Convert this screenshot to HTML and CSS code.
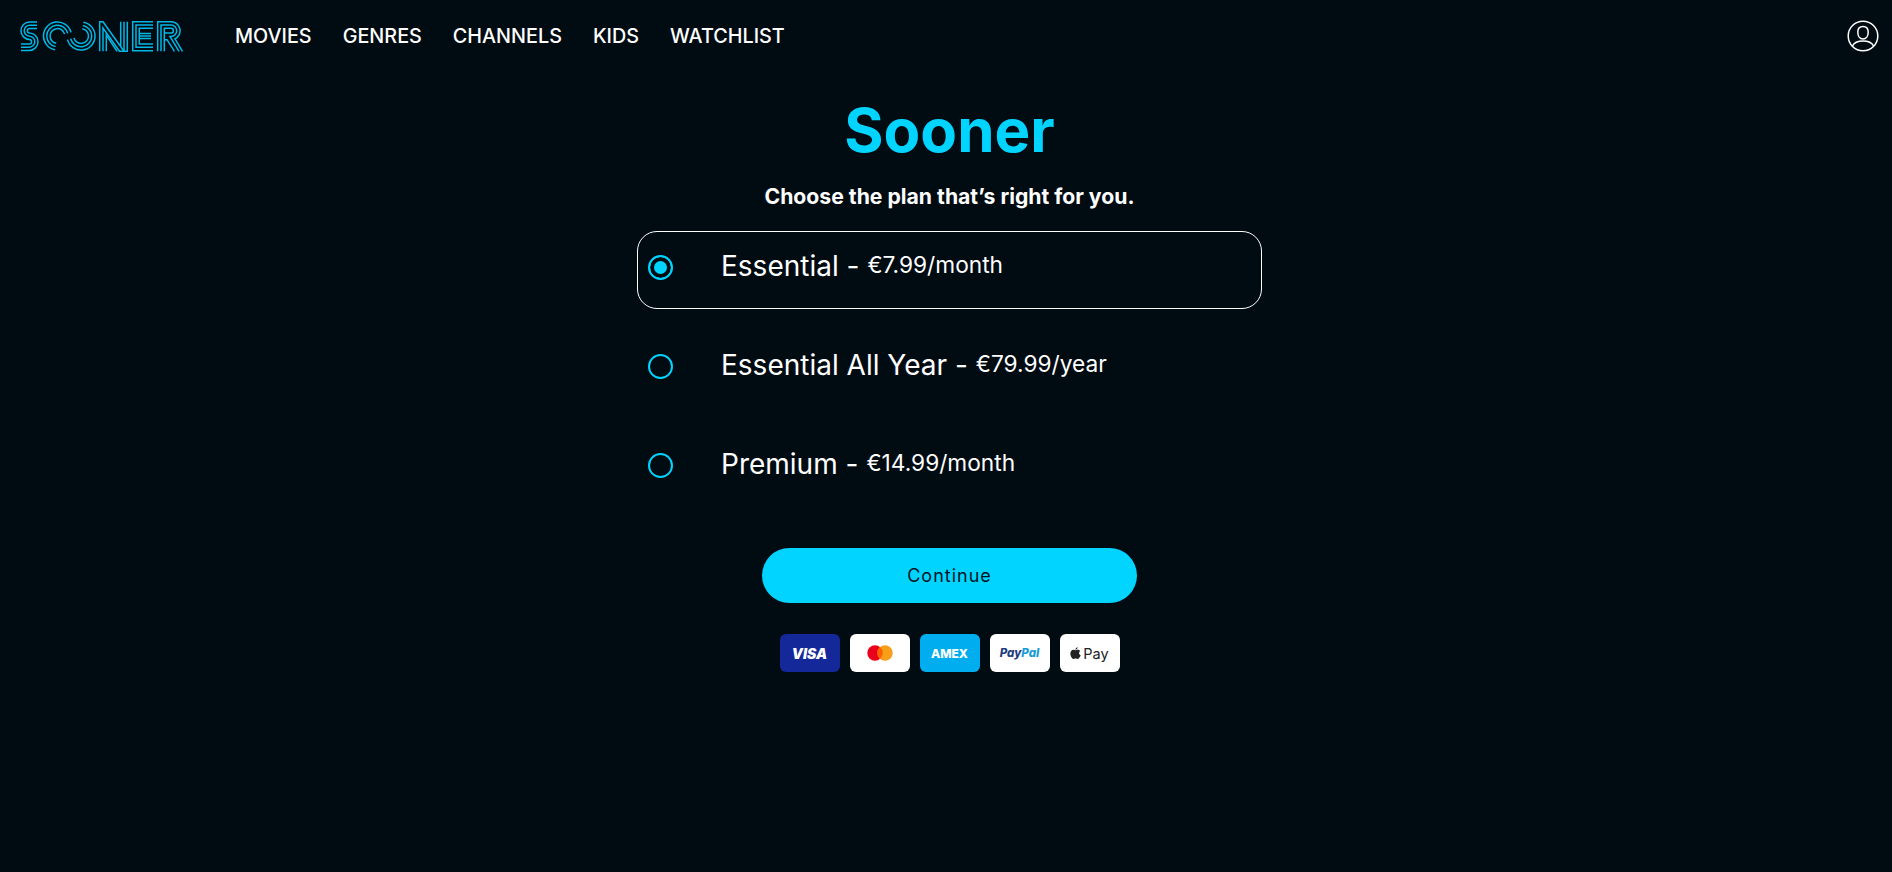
FILE: index.html
```html
<!DOCTYPE html>
<html lang="en">
<head>
    <meta charset="UTF-8">
    <meta name="viewport" content="width=device-width, initial-scale=1.0">
    <title>Sooner - Choose your plan</title>
    <link rel="stylesheet" href="styles.css">
</head>
<body>

<header class="topbar">
    <div class="topbar-left">
        <!-- striped wordmark, three lines per stroke -->
        <svg class="logo" width="164" height="31" viewBox="0 0 164 31" fill="none" stroke="#00b8e6" stroke-width="1.5" role="img" aria-label="Sooner">
            <!-- S -->
            <path d="M17 1H9.700A8.700 8.700 0 0 0 9.700 18.400H9.300A2.300 2.300 0 0 1 9.300 23H1"/>
            <path d="M17 4.200H9.700A5.500 5.500 0 0 0 9.700 15.200H9.300A5.500 5.500 0 0 1 9.300 26.200H1"/>
            <path d="M17 7.400H9.700A2.300 2.300 0 0 0 9.700 12H9.300A8.700 8.700 0 0 1 9.300 29.400H1"/>
            <!-- first O -->
            <path d="M51 11.400A14 14 0 1 0 35.100 28.800"/>
            <path d="M47.800 12.200A10.700 10.700 0 1 0 35.600 25.500"/>
            <path d="M44.600 13.100A7.400 7.400 0 1 0 36.200 22.300"/>
            <!-- second O -->
            <path d="M63.400 1.200A14 14 0 1 1 47.500 18.600"/>
            <path d="M62.900 4.500A10.700 10.700 0 1 1 50.700 17.800"/>
            <path d="M62.300 7.700A7.400 7.400 0 1 1 53.900 16.900"/>
            <!-- N -->
            <path d="M79.700 30.300V.7H83L104 30.300H107.300V.7"/>
            <path d="M83 30.300V7L99.500 30.300H104V.7"/>
            <path d="M86.300 30.300V14L97 30.300"/>
            <path d="M100.700 .7V25"/>
            <!-- E -->
            <path d="M133 .7H112.700V29.700H133"/>
            <path d="M133 4H116V26.300H133"/>
            <path d="M133 7.300H119.300V23H133"/>
            <path d="M119.300 12.500H131M119.300 15H131M119.300 17.500H131"/>
            <!-- R -->
            <path d="M137.700 30.300V.7H151A9 9 0 0 1 155 17.800L162.500 30.300"/>
            <path d="M141 30.300V4H151A5.700 5.700 0 0 1 151 15.400H150L159 30.300"/>
            <path d="M144.300 30.300V7.300H151A2.400 2.400 0 0 1 151 12.100H144.300"/>
            <path d="M144.300 18.700H147L154.500 30.300"/>
        </svg>
        <nav class="mainnav">
            <a href="#">MOVIES</a>
            <a href="#">GENRES</a>
            <a href="#">CHANNELS</a>
            <a href="#">KIDS</a>
            <a href="#">WATCHLIST</a>
        </nav>
    </div>
    <svg class="account-icon" width="32" height="32" viewBox="0 0 32 32" fill="none" stroke="white" stroke-width="1.500">
        <circle cx="16" cy="16" r="14.800"/>
        <path d="M16 6.500C12.500 6.500 10.800 9 10.800 12C10.800 15.500 12.500 19 16 19C19.500 19 21.200 15.500 21.200 12C21.200 9 19.500 6.500 16 6.500Z"/>
        <path d="M5.500 26C7 22.800 11 21 16 21C21 21 25 22.800 26.500 26"/>
    </svg>
</header>

<main class="plans-page">
    <h1>Sooner</h1>
    <p class="subtitle">Choose the plan that’s right for you.</p>

    <div class="plan-list">
        <label class="plan plan-selected">
            <span class="radio"></span>
            <span class="plan-name">Essential -</span>
            <span class="plan-price">€7.99/month</span>
        </label>
        <label class="plan">
            <span class="radio"></span>
            <span class="plan-name">Essential All Year -</span>
            <span class="plan-price">€79.99/year</span>
        </label>
        <label class="plan">
            <span class="radio"></span>
            <span class="plan-name">Premium -</span>
            <span class="plan-price">€14.99/month</span>
        </label>
    </div>

    <button class="button">Continue</button>

    <div class="payment-row">
        <div class="pay-card pay-visa">VISA</div>
        <div class="pay-card">
            <svg width="26" height="16" viewBox="0 0 26 16">
                <circle cx="8" cy="8" r="7.700" fill="#eb001b"/>
                <circle cx="18" cy="8" r="7.700" fill="#f79e1b"/>
                <path d="M13 2.100A7.700 7.700 0 0 1 13 13.900A7.700 7.700 0 0 1 13 2.100Z" fill="#ff5f00"/>
            </svg>
        </div>
        <div class="pay-card pay-amex">AMEX</div>
        <div class="pay-card pay-paypal"><span class="pp-dark">Pay</span><span class="pp-light">Pal</span></div>
        <div class="pay-card pay-apple">
            <svg width="11" height="13" viewBox="0 0 13 15" fill="#222">
                <path d="M9.100 0C9.200 1.200 8 2.900 6.400 3C6.200 1.700 7.600 .2 9.100 0ZM6.500 3.800C7.200 3.800 8 3.100 9.300 3.100C10.400 3.100 11.400 3.700 12 4.600C10 5.800 10.400 8.700 12.600 9.600C12 11.200 10.600 14 9.200 14C8.200 14 7.900 13.400 6.600 13.400C5.300 13.400 5 14 4 14C2.400 14 .4 10.500 .4 7.900C.4 4.900 2.300 3.200 4.100 3.200C5.100 3.200 5.900 3.800 6.500 3.800Z"/>
            </svg>
            <span>Pay</span>
        </div>
    </div>
</main>

</body>
</html>
```

FILE: styles.css
```css
* {
    box-sizing: border-box;
}
body {
    margin: 0;
    min-height: 872px;
    background-color: #000b12;
    color: white;
    font-family: "Inter", "Liberation Sans", sans-serif;
}
.topbar {
    display: flex;
    justify-content: space-between;
    align-items: center;
    height: 72px;
    padding: 0 13px 0 20px;
}
.topbar-left {
    display: flex;
    align-items: center;
}
.logo {
    display: block;
}
.mainnav {
    display: flex;
    gap: 31px;
    margin-left: 51px;
}
.mainnav a {
    color: white;
    text-decoration: none;
    font-size: 19.8px;
    font-weight: 500;
}
.plans-page {
    display: flex;
    flex-direction: column;
    align-items: center;
    padding-left: 7px;
}
h1 {
    margin: 22px 0 0;
    font-size: 60px;
    line-height: 72px;
    font-weight: 700;
    color: #00d4ff;
}
.subtitle {
    margin: 17px 0 0;
    font-size: 21.2px;
    line-height: 26px;
    font-weight: 700;
}
.plan-list {
    width: 625px;
    margin-top: 22px;
    display: flex;
    flex-direction: column;
    gap: 21px;
}
.plan {
    display: flex;
    align-items: flex-start;
    height: 78px;
    padding: 17px 10px 0 10px;
    border: 1px solid transparent;
    border-radius: 20px;
}
.plan-selected {
    border-color: white;
}
.radio {
    width: 25px;
    height: 25px;
    margin-top: 6px;
    border: 2.5px solid #00d4ff;
    border-radius: 50%;
    flex-shrink: 0;
}
.plan-selected .radio {
    background-color: #00d4ff;
    box-shadow: inset 0 0 0 4px #000b12;
}
.plan-name {
    margin-left: 48px;
    font-size: 28px;
    line-height: 34px;
}
.plan-price {
    margin-left: 8px;
    margin-top: 1px;
    font-size: 22.7px;
    line-height: 30px;
}
.button {
    width: 375px;
    height: 55px;
    margin-top: 41px;
    border: none;
    border-radius: 28px;
    background-color: #00d4ff;
    color: #00141f;
    font-family: inherit;
    font-size: 18px;
    letter-spacing: 1px;
    cursor: pointer;
}
.payment-row {
    display: flex;
    gap: 10px;
    margin-top: 31px;
}
.pay-card {
    display: flex;
    justify-content: center;
    align-items: center;
    width: 60px;
    height: 38px;
    border-radius: 6px;
    background-color: white;
}
.pay-visa {
    background-color: #14289a;
    color: white;
    font-size: 14px;
    font-weight: 900;
    font-style: italic;
}
.pay-amex {
    background-color: #00aeef;
    color: white;
    font-size: 12px;
    font-weight: 800;
}
.pay-paypal {
    font-size: 11.5px;
    font-weight: 800;
    font-style: italic;
}
.pp-dark {
    color: #253b80;
}
.pp-light {
    color: #179bd7;
}
.pay-apple {
    gap: 2px;
    color: #222;
    font-size: 14.5px;
}
```
